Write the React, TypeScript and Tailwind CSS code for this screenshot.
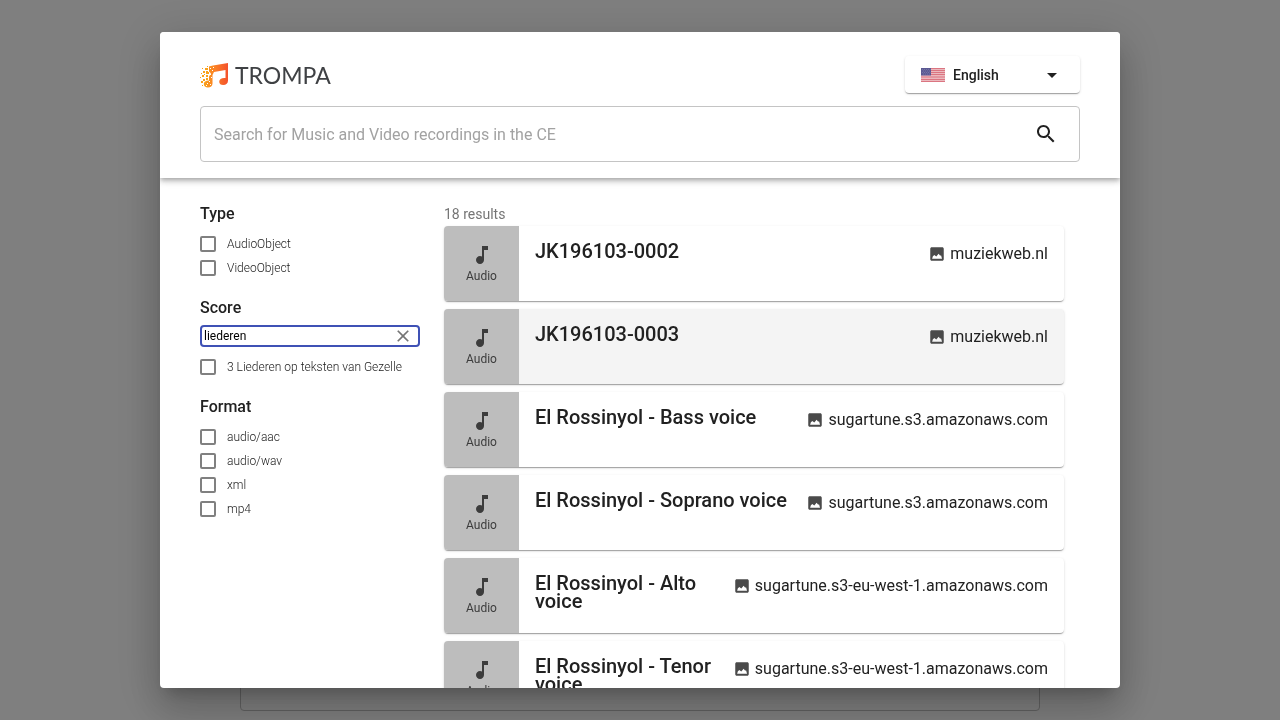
import { useState } from "react";
import type { ReactNode } from "react";

type Result = { title: string; source: string; highlighted?: boolean };

const results: Result[] = [
  { title: "JK196103-0002", source: "muziekweb.nl" },
  { title: "JK196103-0003", source: "muziekweb.nl", highlighted: true },
  { title: "El Rossinyol - Bass voice", source: "sugartune.s3.amazonaws.com" },
  { title: "El Rossinyol - Soprano voice", source: "sugartune.s3.amazonaws.com" },
  { title: "El Rossinyol - Alto voice", source: "sugartune.s3-eu-west-1.amazonaws.com" },
  { title: "El Rossinyol - Tenor voice", source: "sugartune.s3-eu-west-1.amazonaws.com" },
];

function Icon({ d, className }: { d: string; className: string }) {
  return (
    <svg viewBox="0 0 24 24" fill="currentColor" aria-hidden="true" className={className}>
      <path d={d} />
    </svg>
  );
}

const noteIcon =
  "M12 3v10.55c-.59-.34-1.27-.55-2-.55-2.21 0-4 1.79-4 4s1.79 4 4 4 4-1.79 4-4V7h4V3h-6z";
const searchIcon =
  "M15.5 14h-.79l-.28-.27C15.41 12.59 16 11.11 16 9.5 16 5.91 13.09 3 9.5 3S3 5.91 3 9.5 5.91 16 9.5 16c1.61 0 3.09-.59 4.23-1.57l.27.28v.79l5 4.99L20.49 19l-4.99-5zm-6 0C7.01 14 5 11.99 5 9.5S7.01 5 9.5 5 14 7.01 14 9.5 11.99 14 9.5 14z";
const closeIcon =
  "M19 6.41L17.59 5 12 10.59 6.41 5 5 6.41 10.59 12 5 17.59 6.41 19 12 13.41 17.59 19 19 17.59 13.41 12z";
const imageIcon =
  "M21 19V5c0-1.1-.9-2-2-2H5c-1.1 0-2 .9-2 2v14c0 1.1.9 2 2 2h14c1.1 0 2-.9 2-2zM5.500 18.300l1-3.300 2-1.600 2.500 2 3.200-3.600 1.800 2.200 1.500 0 1.200 4.300z";

function Logo() {
  return (
    <a href="#" className="flex items-center gap-1.5 text-[#3f4144]">
      <svg viewBox="0 0 29 26" aria-hidden="true" className="h-[26px] w-[29px]">
        <defs>
          <linearGradient id="note" x1="0" y1="0" x2="1" y2="0">
            <stop offset="0" stopColor="#f9a11b" />
            <stop offset="0.5" stopColor="#fa7d26" />
            <stop offset="1" stopColor="#f4512c" />
          </linearGradient>
        </defs>
        <path
          fill="url(#note)"
          d="M9 4.500l4-1L28 1v17.500c0 2.800-1.800 4.500-4.800 4.500-2.400 0-4-1.300-4-3.300 0-2.500 2.500-4.200 6.300-3.700V8L14 10l-1.500 3v8.500c0 2.500-2 4-4.500 4s-4.200-1.500-4.200-3.500c0-2.300 2.200-3.700 5.200-3.500v-4l2-3-2-2z"
        />
        <path
          fill="#f9a11b"
          d="M7 4h1v1H7zM5 6h3v2H5zM2 6h1v1H2zM3 9h2v2H3zM6 9h3v3H6zM1 11h1v1H1zM2 13h2v2H2zM6 13h2v2H6zM4 12h1v1H4zM0 15h1v1H0zM3 17h2v2H3zM6 16h2v2H6zM1 19h2v2H1zM2 23h1v1H2z"
        />
        <path
          fill="#fff"
          d="M10 6h1v1h-1zM13 5h1v1h-1zM12 8h1v1h-1zM8 9h1v1H8zM10 12h1v1h-1zM11 15h1v1h-1zM9 19h1v1H9zM7 21h1v1H7zM10 22h1v1h-1zM6 23h1v1H6z"
        />
      </svg>
      <span className="font-['Lato',sans-serif] text-[23px] leading-6">TROMPA</span>
    </a>
  );
}

function Flag() {
  return (
    <svg viewBox="0 0 24 14" aria-hidden="true" className="h-3.5 w-6 shrink-0">
      <path fill="#ebb9be" d="M0 0h24v14H0z" />
      <path
        stroke="#db7581"
        strokeWidth="1"
        d="M0 .5h24M0 2.500h24M0 4.500h24M0 6.500h24M0 9h24M0 11.500h24M0 13.500h24"
      />
      <path fill="#5b5993" d="M0 0h10v7.500H0z" />
      <path stroke="#7f7eac" strokeWidth=".7" strokeDasharray="1 1" d="M1 1.500h8.500M2 3h7.500M1 4.500h8.500M2 6h7.500" />
    </svg>
  );
}

function FacetGroup({ title, children }: { title: string; children: ReactNode }) {
  return (
    <section>
      <h2 className="mb-[5px] text-base leading-6 font-medium">{title}</h2>
      {children}
    </section>
  );
}

function FacetList({ items }: { items: string[] }) {
  return (
    <ul className="pt-px">
      {items.map((item) => (
        <li key={item}>
          <label className="flex h-6 items-center gap-[11px] text-xs font-light">
            <input
              type="checkbox"
              className="size-4 appearance-none rounded-xs border-2 border-[#808080] checked:bg-[#3f51b5]"
            />
            {item}
          </label>
        </li>
      ))}
    </ul>
  );
}

function ResultCard({ title, source, highlighted }: Result) {
  return (
    <li>
      <a
        href="#"
        className={`flex h-[75px] overflow-hidden rounded shadow-[0_2px_1px_-1px_rgba(0,0,0,0.2),0_1px_1px_0_rgba(0,0,0,0.14),0_1px_3px_0_rgba(0,0,0,0.12)] ${
          highlighted ? "bg-[#f4f4f4]" : "bg-white"
        }`}
      >
        <span className="flex w-[75px] shrink-0 flex-col items-center justify-center bg-[#bdbdbd] text-[#3c3c3c]">
          <Icon d={noteIcon} className="size-6" />
          <span className="text-xs leading-[18px]">Audio</span>
        </span>
        <span className="flex min-w-0 flex-1 items-start justify-between gap-3 p-4">
          <span className="text-xl leading-[18px] font-medium">{title}</span>
          <span className="flex shrink-0 items-center gap-1 text-base leading-6">
            <Icon d={imageIcon} className="size-[18px] text-[#4a4a4a]" />
            {source}
          </span>
        </span>
      </a>
    </li>
  );
}

export default function App() {
  const [query, setQuery] = useState("liederen");
  return (
    <div className="min-h-screen bg-white font-['Roboto',sans-serif] text-[#212121]">
      <main className="px-4 pt-16">
        <div className="mx-auto h-[647px] max-w-[800px] rounded border border-[#c4c4c4]" />
      </main>
      <div className="fixed inset-0 flex justify-center bg-black/50 p-8">
        <div
          role="dialog"
          aria-label="Search"
          className="flex w-full max-w-[960px] flex-col overflow-hidden rounded bg-white shadow-[0_11px_15px_-7px_rgba(0,0,0,0.2),0_24px_38px_3px_rgba(0,0,0,0.14),0_9px_46px_8px_rgba(0,0,0,0.12)]"
        >
          <header className="relative z-10 shrink-0 bg-white px-10 pt-6 pb-4 shadow-[0_2px_4px_-1px_rgba(0,0,0,0.2),0_4px_5px_0_rgba(0,0,0,0.14),0_1px_10px_0_rgba(0,0,0,0.12)]">
            <div className="mb-[13px] flex items-center justify-between">
              <Logo />
              <div className="flex h-[37px] w-[175px] items-center gap-2 rounded px-4 shadow-[0_2px_1px_-1px_rgba(0,0,0,0.2),0_1px_1px_0_rgba(0,0,0,0.14),0_1px_3px_0_rgba(0,0,0,0.12)]">
                <Flag />
                <select
                  aria-label="Language"
                  className="min-w-0 flex-1 appearance-none bg-transparent text-sm font-medium outline-none"
                >
                  <option>English</option>
                </select>
                <Icon d="M7 10l5 5 5-5z" className="size-6" />
              </div>
            </div>
            <div className="flex h-14 items-center rounded border border-[#c4c4c4] pr-[21px] pl-[13px]">
              <input
                type="search"
                aria-label="Search recordings"
                placeholder="Search for Music and Video recordings in the CE"
                className="h-full min-w-0 flex-1 pt-px text-base outline-none placeholder:text-[#a2a2a2]"
              />
              <button type="button" aria-label="Search">
                <Icon d={searchIcon} className="size-6" />
              </button>
            </div>
          </header>
          <div className="flex min-h-0 flex-1 gap-6 overflow-y-auto pt-6 pr-14 pl-10 [scrollbar-width:none]">
            <aside className="flex w-[220px] shrink-0 flex-col gap-4">
              <FacetGroup title="Type">
                <FacetList items={["AudioObject", "VideoObject"]} />
              </FacetGroup>
              <FacetGroup title="Score">
                <div className="mb-[7px] flex h-[22px] items-center rounded border-2 border-[#3f51b5] pr-[5px] pl-0.5">
                  <input
                    type="text"
                    aria-label="Filter scores"
                    value={query}
                    onChange={(event) => setQuery(event.target.value)}
                    className="min-w-0 flex-1 text-xs text-black outline-none"
                  />
                  <button type="button" aria-label="Clear" onClick={() => setQuery("")}>
                    <Icon d={closeIcon} className="size-5 text-[#757575]" />
                  </button>
                </div>
                <FacetList items={["3 Liederen op teksten van Gezelle"]} />
              </FacetGroup>
              <FacetGroup title="Format">
                <FacetList items={["audio/aac", "audio/wav", "xml", "mp4"]} />
              </FacetGroup>
            </aside>
            <section className="min-w-0 flex-1">
              <p className="text-sm leading-6 text-[#757575]">18 results</p>
              <ul className="space-y-2">
                {results.map((result) => (
                  <ResultCard key={result.title} {...result} />
                ))}
              </ul>
            </section>
          </div>
        </div>
      </div>
    </div>
  );
}
